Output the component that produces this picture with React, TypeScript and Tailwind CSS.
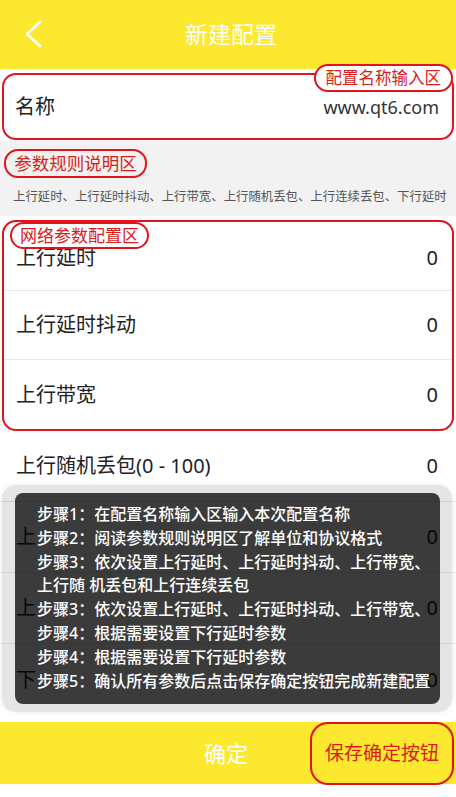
import React from 'react';

const topRows = ['上行延时', '上行延时抖动', '上行带宽'];
// rows under the steps overlay only show their first character at the edge
const moreRows = ['上行随机丢包(0 - 100)', '上', '上', '下'];

const steps = [
  '步骤1：在配置名称输入区输入本次配置名称',
  '步骤2：阅读参数规则说明区了解单位和协议格式',
  '步骤3：依次设置上行延时、上行延时抖动、上行带宽、',
  '上行随 机丢包和上行连续丢包',
  '步骤3：依次设置上行延时、上行延时抖动、上行带宽、',
  '步骤4：根据需要设置下行延时参数',
  '步骤4：根据需要设置下行延时参数',
  '步骤5：确认所有参数后点击保存确定按钮完成新建配置',
];

function Tag({ text, className }: { text: string; className: string }) {
  return (
    <div
      className={`flex items-center justify-center border-2 border-[#e3131b] rounded-[14px] text-[#d91c1c] leading-none ${className}`}
    >
      {text}
    </div>
  );
}

export default function App() {
  return (
    <div
      className="relative w-[456px] h-[797px] overflow-hidden bg-white"
      style={{ fontFamily: '"Noto Sans", "Noto Sans CJK SC", sans-serif' }}
    >
      {/* Header */}
      <div className="relative h-[69px] bg-[#fce82e] flex items-center justify-center">
        <svg className="absolute left-[24px] top-[20px]" width="20" height="28" viewBox="0 0 20 28">
          <path d="M16 2 L3 14 L16 26" fill="none" stroke="white" strokeWidth="2.6" strokeLinecap="round" strokeLinejoin="round" />
        </svg>
        <span className="text-white text-[23px] ml-[6px]">新建配置</span>
      </div>

      {/* Name */}
      <div className="relative bg-white pt-[4px] pb-[1px] px-[2px]">
        <div className="h-[67px] border-2 border-[#e3131b] rounded-[14px] flex items-center justify-between pl-[11px] pr-[13px]">
          <span className="text-[20px] text-[#222]">名称</span>
          <span className="text-[18px] text-[#333] mt-[2px]">www.qt6.com</span>
        </div>
        <Tag text="配置名称输入区" className="absolute right-[3px] top-[-5px] h-[28px] px-[10px] bg-white text-[16.5px]" />
      </div>

      {/* Rules */}
      <div className="bg-[#f2f2f2] pt-[8px] pb-[10px]">
        <Tag text="参数规则说明区" className="ml-[4px] w-[143px] h-[29px] text-[17.5px]" />
        <div className="mt-[10px] pl-[13px] text-[12.4px] leading-[18px] text-[#555] whitespace-nowrap">
          上行延时、上行延时抖动、上行带宽、上行随机丢包、上行连续丢包、下行延时
        </div>
      </div>

      {/* Network params */}
      <div className="bg-white pt-[4px] px-[2px]">
        <div className="relative border-2 border-[#e3131b] rounded-[14px]">
          {topRows.map((label, i) => (
            <div
              key={label}
              className={`h-[69px] flex items-center justify-between pl-[12px] pr-[14px] ${i < topRows.length - 1 ? 'border-b border-[#e8e8e8]' : ''} ${i === 0 ? 'pt-[4px]' : ''}`}
            >
              <span className="text-[20px] text-[#222]">{label}</span>
              <span className="text-[20px] text-[#222]">0</span>
            </div>
          ))}
          <Tag text="网络参数配置区" className="absolute left-[6px] top-[0px] h-[27px] w-[139px] bg-white text-[17px]" />
        </div>
      </div>
      <div className="bg-white pb-[7px]">
        {moreRows.map((label, i) => (
          <div
            key={i}
            className={`h-[71px] flex items-center justify-between pl-[16px] pr-[18px] ${i < moreRows.length - 1 ? 'border-b border-[#e8e8e8]' : ''}`}
          >
            <span className="text-[20px] text-[#222]">{label}</span>
            <span className="text-[20px] text-[#222]">0</span>
          </div>
        ))}
      </div>

      {/* Bottom bar */}
      <div className="relative h-[62px] bg-[#fce82e] flex items-center justify-center">
        <span className="text-white text-[22px] mr-[4px]">确定</span>
        <Tag text="保存确定按钮" className="absolute right-[2px] top-[0px] w-[144px] h-[63px] rounded-[18px] text-[19px]" />
      </div>

      {/* Steps overlay */}
      <div className="absolute left-[2px] top-[485px] w-[450px] h-[227px] rounded-[14px] bg-black/10 shadow-[0_0_6px_rgba(0,0,0,0.08)]">
        <div className="absolute left-[13px] top-[8px] w-[425px] h-[211px] rounded-[8px] bg-black/[0.74] pt-[10px] pl-[22px]">
          {steps.map((s, i) => (
            <div key={i} className="text-white text-[16px] font-medium leading-[23.8px] whitespace-nowrap">
              {s}
            </div>
          ))}
        </div>
      </div>
    </div>
  );
}
